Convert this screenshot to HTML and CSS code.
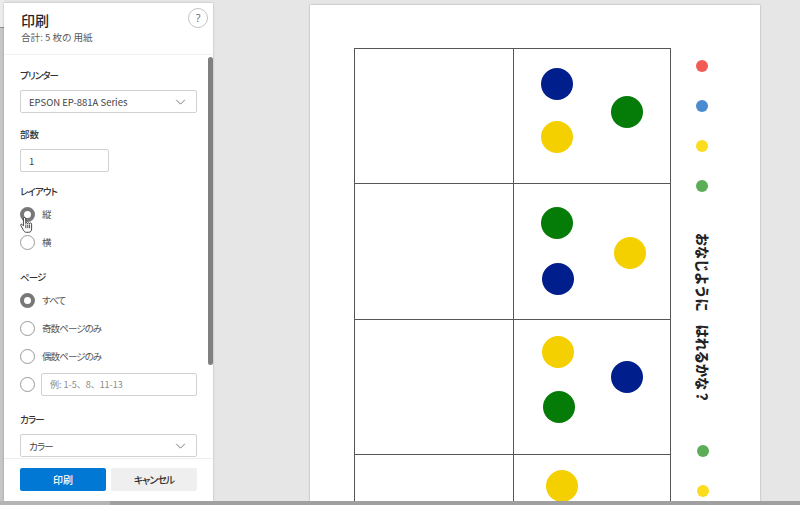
FILE: index.html
```html
<!DOCTYPE html>
<html lang="ja">
<head>
<meta charset="utf-8">
<title>印刷</title>
<link rel="stylesheet" href="styles.css">
</head>
<body>
<div class="shell">
  <aside class="panel">
    <header class="panel-head">
      <div>
        <h1 class="title">印刷</h1>
        <p class="subtitle">合計: 5 枚の 用紙</p>
      </div>
      <button class="help">?</button>
    </header>
    <div class="panel-body">
      <div class="scrollbar"></div>
      <section class="group">
        <h2 class="label kana">プリンター</h2>
        <div class="field select"><span>EPSON EP-881A Series</span>
          <svg class="chev" viewBox="0 0 12 7"><path d="M1 1l5 5 5-5"/></svg></div>
      </section>
      <section class="group copies-group">
        <h2 class="label">部数</h2>
        <div class="field copies"><span>1</span></div>
      </section>
      <section class="group options">
        <h2 class="label kana">レイアウト</h2>
        <div class="radio"><i class="dot on"></i><span>縦</span>
          <svg class="cursor" viewBox="0 0 14 18"><path d="M5 1.5c-1 0-1.3.7-1.3 1.5v7.5L2.3 9C1.3 8.2.2 9 .9 10.2l3 5.3c.7 1.2 1.6 1.9 3 1.9h2.4c2 0 3.2-1.4 3.2-3.4V8.600c0-1.700-2-1.700-2.200-.4 0-1.300-2-1.400-2.200-.2 0-1.300-1.900-1.300-1.900-.1V3c0-.8-.3-1.500-1.200-1.500z"/><path d="M6.300 9v4M8.400 9v4M10.300 9v4"/></svg></div>
        <div class="radio"><i class="dot"></i><span>横</span></div>
      </section>
      <section class="group options">
        <h2 class="label kana">ページ</h2>
        <div class="radio"><i class="dot on"></i><span class="kana">すべて</span></div>
        <div class="radio"><i class="dot"></i><span class="kana">奇数ページのみ</span></div>
        <div class="radio"><i class="dot"></i><span class="kana">偶数ページのみ</span></div>
        <div class="radio"><i class="dot"></i><div class="field range">例: 1-5、8、11-13</div></div>
      </section>
      <section class="group last">
        <h2 class="label kana">カラー</h2>
        <div class="field select"><span class="kana">カラー</span>
          <svg class="chev" viewBox="0 0 12 7"><path d="M1 1l5 5 5-5"/></svg></div>
      </section>
    </div>
    <footer class="panel-foot">
      <button class="btn primary">印刷</button>
      <button class="btn kana-wide">キャンセル</button>
    </footer>
  </aside>
  <main class="preview">
    <div class="sheet">
      <div class="grid">
        <div class="cell"></div>
        <div class="cell">
          <i class="disc navy c1"></i><i class="disc yellow c2"></i><i class="disc green c3"></i>
        </div>
        <div class="cell"></div>
        <div class="cell">
          <i class="disc green c4"></i><i class="disc navy c5"></i><i class="disc yellow c6"></i>
        </div>
        <div class="cell"></div>
        <div class="cell">
          <i class="disc yellow c7"></i><i class="disc navy c8"></i><i class="disc green c9"></i>
        </div>
        <div class="cell"></div>
        <div class="cell"><i class="disc yellow c10"></i></div>
      </div>
      <div class="key">
        <div class="key-dots">
          <i class="pip red"></i><i class="pip blue"></i><i class="pip gold"></i><i class="pip lime"></i>
        </div>
        <p class="prompt">おなじように　はれるかな？</p>
        <div class="key-dots lower">
          <i class="pip lime"></i><i class="pip gold"></i>
        </div>
      </div>
    </div>
  </main>
</div>
</body>
</html>
```

FILE: styles.css
```css
* { box-sizing: border-box; }
html, body { margin: 0; height: 100%; overflow: hidden; }
body { font-family: "Noto Sans CJK JP", "Open Sans", sans-serif; color: #333; background: #e6e6e6; font-feature-settings: "palt"; }
.shell { display: flex; width: 800px; height: 505px; padding: 3px 0 4px 4px; position: relative; overflow: hidden; background: #e6e6e6; }
.shell::before { content: ""; position: absolute; left: 0; top: 0; width: 4px; height: 505px; background: linear-gradient(#ececec 27px, #8c8c8c 27px, #8c8c8c 28px, #c6c6c6 28px); }
.shell::after { content: ""; position: absolute; left: 0; bottom: 0; width: 800px; height: 4px; background: linear-gradient(90deg, #b4b4b4 110px, #a0a0a0 110px); }

.panel { width: 209px; flex: none; display: flex; flex-direction: column; background: #fff; position: relative; box-shadow: 0 0 2px rgba(0,0,0,.25); }
.panel-head { height: 52px; flex: none; padding: 7px 5px 0 17px; display: flex; justify-content: space-between; align-items: flex-start; border-bottom: 1px solid #f2f2f2; }
.title { margin: 0; font-size: 14px; line-height: 20px; font-weight: 500; color: #262626; }
.subtitle { margin: 0; font-size: 9.600px; line-height: 14px; color: #595959; }
.help { width: 20px; height: 20px; margin-top: -2px; padding: 0; border: 1px solid #c4c4c4; border-radius: 50%; background: #fff; color: #666; font: 11px/18px "Open Sans", sans-serif; }

.panel-body { flex: 1; min-height: 0; overflow: hidden; padding: 13px 0 0 16px; position: relative; }
.scrollbar { position: absolute; right: 0; top: 2px; width: 5px; height: 308px; background: #808080; border-radius: 3px; }
.group { width: 177px; margin-bottom: 14px; }
.copies-group { margin-bottom: 12px; }
.last { margin-bottom: 0; }
.label { margin: 0 0 8px; font-size: 9.500px; line-height: 14px; font-weight: 500; color: #333; }
.kana { letter-spacing: -.9px; }
.options .label { margin-bottom: 2px; }
.field { height: 23px; border: 1px solid #d1d1d1; border-radius: 2px; background: #fff; font-size: 9.500px; display: flex; align-items: center; padding: 0 8px; color: #444; }
.select { justify-content: space-between; }
.copies { width: 89px; }
.chev { width: 11px; height: 6px; margin-right: 2px; fill: none; stroke: #666; stroke-width: 1; }

.radio { height: 28px; display: flex; align-items: center; gap: 7px; font-size: 9.500px; color: #555; position: relative; }
.dot { width: 15px; height: 15px; flex: none; border: 1px solid #9a9a9a; border-radius: 50%; background: #fff; }
.dot.on { border: 4px solid #787878; }
.range { width: 156px; color: #8a8a8a; margin-left: -1px; font-size: 9px; font-feature-settings: normal; }
.cursor { position: absolute; left: 0; top: 16px; width: 13px; height: 17px; fill: #fff; stroke: #222; stroke-width: .9; }

.panel-foot { height: 43px; flex: none; padding: 9px 16px 0 16px; display: flex; gap: 5px; align-items: flex-start; border-top: 1px solid #eee; background: #fff; }
.btn { height: 23px; width: 86px; padding: 0; border: 0; border-radius: 2px; background: #efefef; color: #333; font: 500 10px/23px "Noto Sans CJK JP", sans-serif; font-feature-settings: "palt"; }
.kana-wide { letter-spacing: -1px; }
.primary { background: #0078d4; color: #fff; }

.preview { flex: 1; min-width: 0; display: flex; padding-left: 97px; }
.sheet { width: 450px; margin-top: 2px; flex: none; background: #fff; box-shadow: 0 0 2px rgba(0,0,0,.3); padding: 43px 0 0 44px; display: flex; overflow: hidden; }
.grid { width: 317px; height: 542px; display: grid; grid-template-columns: 159px 157px; grid-template-rows: repeat(4, 135.300px); border-top: 1px solid #555; border-left: 1px solid #555; flex: none; }
.cell { border-right: 1px solid #555; border-bottom: 1px solid #555; position: relative; }
.disc { position: absolute; width: 32px; height: 32px; border-radius: 50%; }
.navy { background: #001f8c; }
.yellow { background: #f4d000; }
.green { background: #057c07; }
.c1 { left: 27px; top: 19px; }
.c2 { left: 27px; top: 72px; }
.c3 { left: 97px; top: 47px; }
.c4 { left: 27px; top: 23px; }
.c5 { left: 28px; top: 79px; }
.c6 { left: 100px; top: 53px; }
.c7 { left: 28px; top: 16px; }
.c8 { left: 97px; top: 41px; }
.c9 { left: 29px; top: 71px; }
.c10 { left: 32px; top: 15px; }

.key { width: 32px; margin-left: 15px; flex: none; display: flex; flex-direction: column; align-items: center; }
.key-dots { display: flex; flex-direction: column; gap: 28px; padding-top: 12px; }
.key-dots.lower { padding: 42px 0 0 2px; }
.pip { display: block; width: 12px; height: 12px; border-radius: 50%; }
.red { background: #f25a55; }
.blue { background: #4a8cd0; }
.gold { background: #fbdc1e; }
.lime { background: #5cad58; }
.prompt { margin: 41px 0 0; writing-mode: vertical-rl; text-orientation: sideways; font-size: 13.100px; line-height: 14px; font-weight: 900; color: #222; white-space: nowrap; font-feature-settings: normal; }
```
